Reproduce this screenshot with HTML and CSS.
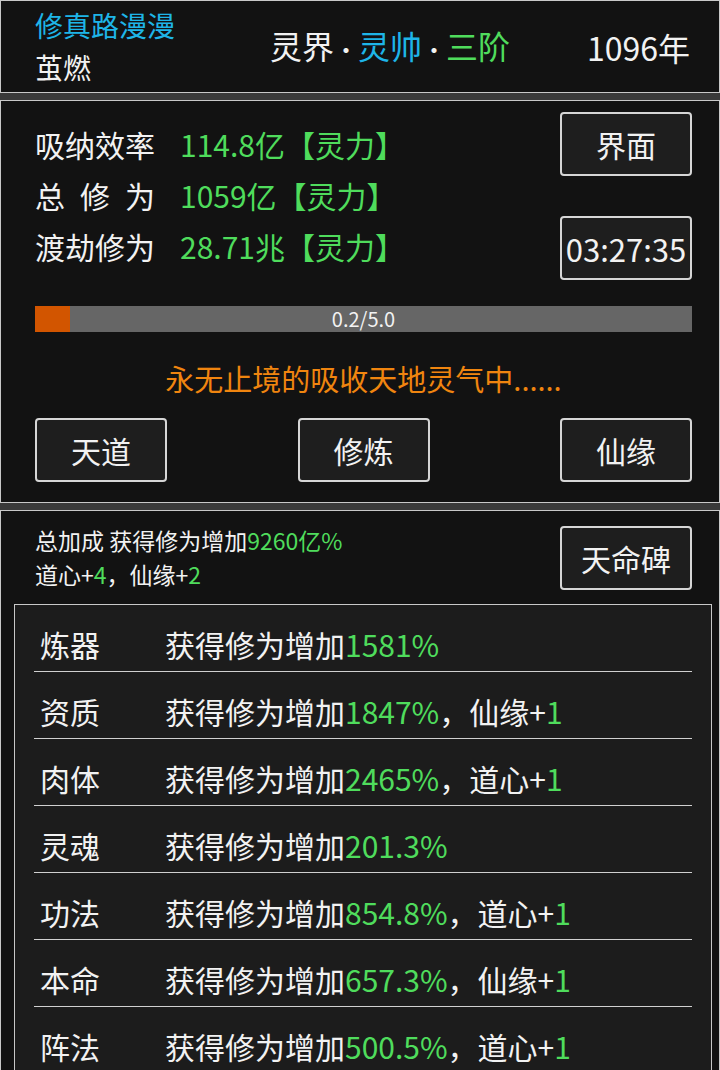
FILE: index.html
```html
<!DOCTYPE html>
<html lang="zh">
<head>
<meta charset="utf-8">
<link rel="stylesheet" href="styles.css">
</head>
<body>
<div class="page">
  <header class="panel header">
    <div class="h-left">
      <div class="h-title">修真路漫漫</div>
      <div class="h-name">茧燃</div>
    </div>
    <div class="h-realm">灵界<span class="dot">·</span><span class="cyan">灵帅</span><span class="dot">·</span><span class="green">三阶</span></div>
    <div class="h-year">1096年</div>
  </header>

  <section class="panel main">
    <div class="top">
      <div class="stats">
        <div class="stat"><span class="label">吸纳效率</span><span class="val">114.8亿【灵力】</span></div>
        <div class="stat"><span class="label spread"><span>总</span><span>修</span><span>为</span></span><span class="val">1059亿【灵力】</span></div>
        <div class="stat"><span class="label">渡劫修为</span><span class="val">28.71兆【灵力】</span></div>
      </div>
      <div class="side">
        <div class="btn">界面</div>
        <div class="btn timer">03:27:35</div>
      </div>
    </div>
    <div class="bar">
      <div class="bar-fill" style="width:5.3%"></div>
      <div class="bar-text">0.2/5.0</div>
    </div>
    <div class="status">永无止境的吸收天地灵气中......</div>
    <div class="actions">
      <div class="btn">天道</div>
      <div class="btn">修炼</div>
      <div class="btn">仙缘</div>
    </div>
  </section>

  <section class="panel bonus">
    <div class="bonus-top">
      <div class="summary">
        <div>总加成 获得修为增加<span class="green">9260亿%</span></div>
        <div>道心+<span class="green">4</span>，仙缘+<span class="green">2</span></div>
      </div>
      <div class="btn">天命碑</div>
    </div>
    <div class="table">
      <div class="row"><span class="r-label">炼器</span><span class="r-val">获得修为增加<span class="green">1581%</span></span></div>
      <div class="row"><span class="r-label">资质</span><span class="r-val">获得修为增加<span class="green">1847%</span>，仙缘+<span class="green">1</span></span></div>
      <div class="row"><span class="r-label">肉体</span><span class="r-val">获得修为增加<span class="green">2465%</span>，道心+<span class="green">1</span></span></div>
      <div class="row"><span class="r-label">灵魂</span><span class="r-val">获得修为增加<span class="green">201.3%</span></span></div>
      <div class="row"><span class="r-label">功法</span><span class="r-val">获得修为增加<span class="green">854.8%</span>，道心+<span class="green">1</span></span></div>
      <div class="row"><span class="r-label">本命</span><span class="r-val">获得修为增加<span class="green">657.3%</span>，仙缘+<span class="green">1</span></span></div>
      <div class="row"><span class="r-label">阵法</span><span class="r-val">获得修为增加<span class="green">500.5%</span>，道心+<span class="green">1</span></span></div>
    </div>
  </section>
</div>
</body>
</html>
```

FILE: styles.css
```css
* { box-sizing: border-box; }
html, body { margin: 0; padding: 0; }
body {
  background: #3a3a3a;
  font-family: "Noto Sans CJK SC", "Noto Sans", sans-serif;
  color: #f2f2f2;
  width: 720px;
  height: 1070px;
  overflow: hidden;
}
.page { display: flex; flex-direction: column; gap: 7px; }
.panel {
  background: #121212;
  border: 1px solid #c8c8c8;
}
.green { color: #4fdc5c; }
.cyan { color: #1eb5e8; }

/* header */
.header {
  height: 93px;
  display: flex;
  align-items: center;
  padding: 0 29px 0 34px;
}
.h-left { width: 235px; display: flex; flex-direction: column; margin-top: -1px; }
.h-title { font-size: 28px; line-height: 42px; color: #1eb5e8; }
.h-name { font-size: 28px; line-height: 42px; }
.h-realm { font-size: 32px; line-height: 44px; }
.h-realm .dot { font-size: 24px; }
.h-year { margin-left: auto; font-size: 32px; line-height: 44px; }

/* main */
.main { height: 403px; padding: 11px 27px 0 34px; }
.top { display: flex; justify-content: space-between; }
.stats { margin-top: 6px; }
.stat { display: flex; align-items: center; height: 51px; font-size: 30px; }
.label { width: 120px; margin-right: 25px; }
.spread { display: inline-flex; justify-content: space-between; }
.val { color: #4fdc5c; }
.side { display: flex; flex-direction: column; gap: 40px; }
.btn {
  width: 132px;
  height: 64px;
  border: 2px solid #d6d6d6;
  border-radius: 4px;
  background: #1e1e1e;
  display: flex;
  align-items: center;
  justify-content: center;
  font-size: 30px;
}
.timer { font-size: 31px; }
.bar {
  position: relative;
  margin-top: 26px;
  height: 26px;
  background: #666666;
}
.bar-fill { height: 100%; background: #d25500; }
.bar-text {
  position: absolute;
  inset: 0;
  text-align: center;
  font-size: 20px;
  line-height: 26px;
}
.status {
  margin-top: 26px;
  text-align: center;
  font-size: 29px;
  line-height: 40px;
  color: #f0850f;
}
.actions {
  margin-top: 20px;
  display: flex;
  justify-content: space-between;
}

/* bonus */
.bonus { flex: 1; height: 600px; padding: 12px 0 0 13px; }
.bonus-top {
  display: flex;
  justify-content: space-between;
  align-items: flex-start;
  padding: 0 27px 0 21px;
}
.bonus-top .btn { margin-top: 3px; }
.summary { font-size: 23px; line-height: 34px; }
.table {
  margin-top: 13px;
  width: 698px;
  background: #1c1c1c;
  border: 1px solid #c8c8c8;
  padding: 0 19px;
}
.row {
  display: flex;
  align-items: center;
  height: 67px;
  padding: 21px 0 9px 6px;
  border-bottom: 1px solid #d0d0d0;
  font-size: 30px;
  line-height: 36px;
}
.r-label { width: 125px; }
```
